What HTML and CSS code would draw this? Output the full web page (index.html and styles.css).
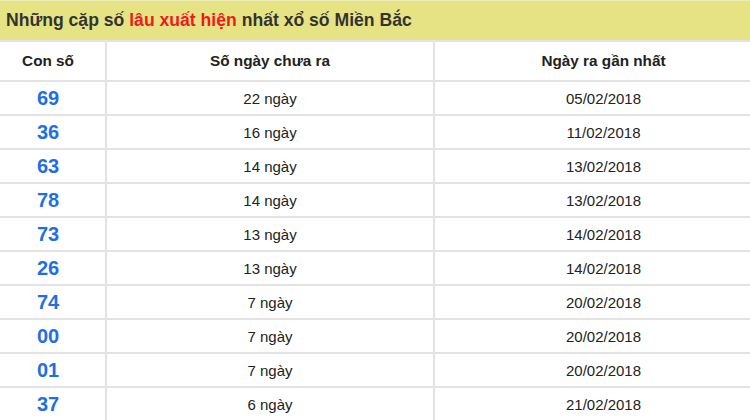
FILE: index.html
```html
<!DOCTYPE html>
<html lang="vi">
<head>
<meta charset="utf-8">
<title>Lâu xuất hiện</title>
<link rel="stylesheet" href="styles.css">
</head>
<body>
<div class="page">
  <div class="title">Những cặp số <span class="hot">lâu xuất hiện</span> nhất xổ số Miền Bắc</div>
  <table class="stats">
    <colgroup><col class="c1"><col class="c2"><col class="c3"></colgroup>
    <thead>
      <tr><th>Con số</th><th>Số ngày chưa ra</th><th>Ngày ra gần nhất</th></tr>
    </thead>
    <tbody>
      <tr><td class="num">69</td><td>22 ngày</td><td>05/02/2018</td></tr>
      <tr><td class="num">36</td><td>16 ngày</td><td>11/02/2018</td></tr>
      <tr><td class="num">63</td><td>14 ngày</td><td>13/02/2018</td></tr>
      <tr><td class="num">78</td><td>14 ngày</td><td>13/02/2018</td></tr>
      <tr><td class="num">73</td><td>13 ngày</td><td>14/02/2018</td></tr>
      <tr><td class="num">26</td><td>13 ngày</td><td>14/02/2018</td></tr>
      <tr><td class="num">74</td><td>7 ngày</td><td>20/02/2018</td></tr>
      <tr><td class="num">00</td><td>7 ngày</td><td>20/02/2018</td></tr>
      <tr><td class="num">01</td><td>7 ngày</td><td>20/02/2018</td></tr>
      <tr><td class="num">37</td><td>6 ngày</td><td>21/02/2018</td></tr>
    </tbody>
  </table>
</div>
</body>
</html>
```
FILE: styles.css
```css
html, body {
  margin: 0;
  padding: 0;
  background: #ffffff;
}
.page {
  width: 750px;
  height: 420px;
  overflow: hidden;
  font-family: "Liberation Sans", Arial, sans-serif;
  color: #222222;
}
.title {
  box-sizing: border-box;
  height: 42px;
  padding: 0 0 0 6px;
  background: #e6e384;
  border-top: 1px solid #efedb8;
  border-bottom: 2px solid #e3e3e3;
  font-size: 17.6px;
  font-weight: bold;
  line-height: 39px;
  color: #333333;
  white-space: nowrap;
}
.hot {
  color: #f0191d;
}
.stats {
  width: 772px;
  border-collapse: separate;
  border-spacing: 0;
  table-layout: fixed;
}
.c1 { width: 107px; }
.c2 { width: 328px; }
.stats th, .stats td {
  padding: 0;
  text-align: center;
  border-bottom: 2px solid #e3e3e3;
}
.stats th:first-child, .stats td:first-child {
  padding-right: 9px;
}
.stats th:not(:last-child), .stats td:not(:last-child) {
  border-right: 2px solid #e3e3e3;
}
.stats th {
  height: 38px;
  font-size: 15.3px;
  font-weight: bold;
  color: #222222;
}
.stats td {
  height: 32px;
  font-size: 15px;
  color: #222222;
}
.stats td.num {
  font-size: 20px;
  font-weight: bold;
  color: #1f6fe3;
}
```
